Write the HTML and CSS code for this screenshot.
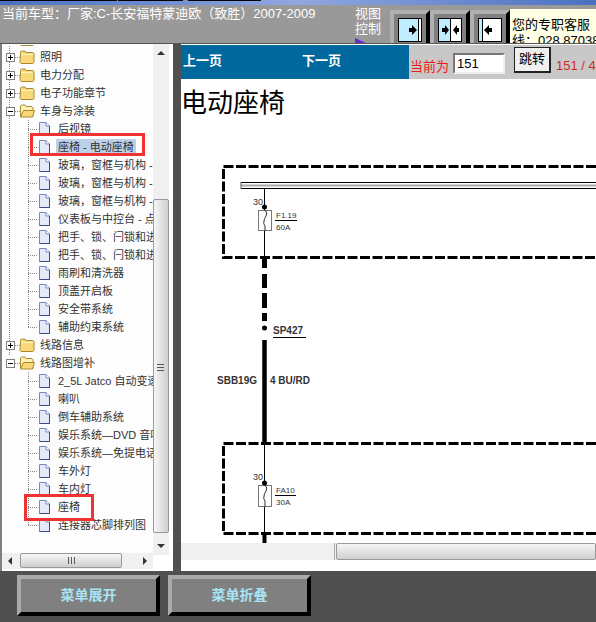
FILE: index.html
```html
<html>
<head>
  <meta charset="utf-8">
  <link rel="stylesheet" href="styles.css">
</head>
<body>
  <svg width="0" height="0" class="defs">
    <symbol id="folder" viewBox="0 0 16 14">
      <path d="M1.5 3.500 L1.500 2 L2.500 1 L6 1 L7 2.500 L14 2.500 L15 3.500 L15 12.500 L14 13.500 L2 13.500 L1 12.500 Z" fill="#f8d878" stroke="#a88a30"/>
      <path d="M2 4.500 H14" stroke="#fff2c0"/>
    </symbol>
    <symbol id="folder-open" viewBox="0 0 16 14">
      <path d="M1.500 12.500 L1.500 2 L2.500 1 L6 1 L7 2.500 L13 2.500 L14 3.500 L14 12.500 Z" fill="#fff0b8" stroke="#a88a30"/>
      <path d="M1.500 13 L4.500 6.500 L15.500 6.500 L13.500 13 Z" fill="#f8d878" stroke="#a88a30"/>
    </symbol>
    <symbol id="doc" viewBox="0 0 13 14">
      <path d="M1.500 .5 H8 L11.500 4 V13.500 H1.500 Z" fill="#e4eafa" stroke="#7a88c0"/>
      <path d="M8 .5 V4 H11.500" fill="#fff" stroke="#7a88c0"/>
      <path d="M11.500 4 V13.500 H1.500" fill="none" stroke="#3a4a80"/>
    </symbol>
  </svg>

  <div class="top-strip"></div>
  <div class="top-bar">
    <div class="car-title">当前车型：厂家:C-长安福特蒙迪欧（致胜）2007-2009</div>
    <div class="view-label">视图<br>控制<span class="view-mark"></span></div>
    <div class="view-buttons">
      <div class="view-btn">
        <svg width="24" height="24" viewBox="0 0 24 24"><rect x=".5" y=".5" width="23" height="23" fill="#fff" stroke="#000"/><rect x="1" y="1" width="19" height="22" fill="#c0ecff"/><path d="M20.500 1V23" stroke="#000"/><path d="M11 10 H14 V7 L19 12 L14 17 V14 H11 Z" fill="#000"/></svg>
      </div>
      <div class="view-btn">
        <svg width="24" height="24" viewBox="0 0 24 24"><rect x=".5" y=".5" width="23" height="23" fill="#fff" stroke="#000"/><rect x="1" y="1" width="11" height="22" fill="#c0ecff"/><path d="M12.500 1V23" stroke="#000"/><path d="M4 10 H7 V7 L11 12 L7 17 V14 H4 Z M21 10 H19 V7 L15 12 L19 17 V14 H21 Z" fill="#000"/></svg>
      </div>
      <div class="view-btn">
        <svg width="24" height="24" viewBox="0 0 24 24"><rect x=".5" y=".5" width="23" height="23" fill="#fff" stroke="#000"/><rect x="1" y="1" width="3" height="22" fill="#c0ecff"/><path d="M4.500 1V23" stroke="#000"/><path d="M14 10 H11 V7 L6 12 L11 17 V14 H14 Z" fill="#000"/></svg>
      </div>
    </div>
    <div class="service">您的专职客服<br>线：028 87038</div>
  </div>

  <div class="main">
    <div class="tree-panel">
      <div class="tree">
        <div class="row clipped"><span class="box plus"></span><svg class="ico"><use href="#folder"/></svg><span class="txt">系统概述</span></div>
        <div class="row"><span class="box plus"></span><svg class="ico"><use href="#folder"/></svg><span class="txt">照明</span></div>
        <div class="row"><span class="box plus"></span><svg class="ico"><use href="#folder"/></svg><span class="txt">电力分配</span></div>
        <div class="row"><span class="box plus"></span><svg class="ico"><use href="#folder"/></svg><span class="txt">电子功能章节</span></div>
        <div class="row"><span class="box minus"></span><svg class="ico"><use href="#folder-open"/></svg><span class="txt">车身与涂装</span></div>
        <div class="row leaf"><svg class="doc"><use href="#doc"/></svg><span class="txt">后视镜</span></div>
        <div class="row leaf"><svg class="doc"><use href="#doc"/></svg><span class="txt selected">座椅 - 电动座椅</span></div>
        <div class="row leaf"><svg class="doc"><use href="#doc"/></svg><span class="txt">玻璃，窗框与机构 - 车窗</span></div>
        <div class="row leaf"><svg class="doc"><use href="#doc"/></svg><span class="txt">玻璃，窗框与机构 - 天窗</span></div>
        <div class="row leaf"><svg class="doc"><use href="#doc"/></svg><span class="txt">玻璃，窗框与机构 - 后窗</span></div>
        <div class="row leaf"><svg class="doc"><use href="#doc"/></svg><span class="txt">仪表板与中控台 - 点烟器</span></div>
        <div class="row leaf"><svg class="doc"><use href="#doc"/></svg><span class="txt">把手、锁、闩锁和进入系统</span></div>
        <div class="row leaf"><svg class="doc"><use href="#doc"/></svg><span class="txt">把手、锁、闩锁和进入系统</span></div>
        <div class="row leaf"><svg class="doc"><use href="#doc"/></svg><span class="txt">雨刷和清洗器</span></div>
        <div class="row leaf"><svg class="doc"><use href="#doc"/></svg><span class="txt">顶盖开启板</span></div>
        <div class="row leaf"><svg class="doc"><use href="#doc"/></svg><span class="txt">安全带系统</span></div>
        <div class="row leaf end"><svg class="doc"><use href="#doc"/></svg><span class="txt">辅助约束系统</span></div>
        <div class="row"><span class="box plus"></span><svg class="ico"><use href="#folder"/></svg><span class="txt">线路信息</span></div>
        <div class="row half"><span class="box minus"></span><svg class="ico"><use href="#folder-open"/></svg><span class="txt">线路图增补</span></div>
        <div class="row leaf tail"><svg class="doc"><use href="#doc"/></svg><span class="txt">2_5L Jatco 自动变速器</span></div>
        <div class="row leaf tail"><svg class="doc"><use href="#doc"/></svg><span class="txt">喇叭</span></div>
        <div class="row leaf tail"><svg class="doc"><use href="#doc"/></svg><span class="txt">倒车辅助系统</span></div>
        <div class="row leaf tail"><svg class="doc"><use href="#doc"/></svg><span class="txt">娱乐系统—DVD 音响系统</span></div>
        <div class="row leaf tail"><svg class="doc"><use href="#doc"/></svg><span class="txt">娱乐系统—免提电话系统</span></div>
        <div class="row leaf tail"><svg class="doc"><use href="#doc"/></svg><span class="txt">车外灯</span></div>
        <div class="row leaf tail"><svg class="doc"><use href="#doc"/></svg><span class="txt">车内灯</span></div>
        <div class="row leaf tail"><svg class="doc"><use href="#doc"/></svg><span class="txt">座椅</span></div>
        <div class="row leaf tail end"><svg class="doc"><use href="#doc"/></svg><span class="txt">连接器芯脚排列图</span></div>
      </div>
      <div class="vscroll">
        <span class="arrow-up"></span>
        <div class="vthumb"><span class="grip"></span></div>
        <span class="arrow-down"></span>
      </div>
      <div class="hscroll">
        <span class="arrow-left"></span>
        <div class="hthumb"><span class="hgrip"></span></div>
        <span class="arrow-right"></span>
      </div>
      <div class="mark mark-one"></div>
      <div class="mark mark-two"></div>
    </div>

    <div class="content">
      <div class="pager">
        <div class="pager-links">
          <span class="page-link">上一页</span>
          <span class="page-link">下一页</span>
        </div>
        <div class="pager-jump">
          <span class="now">当前为</span>
          <span class="page-input">151</span>
          <span class="go">跳转</span>
          <span class="count">151 / 401</span>
        </div>
      </div>
      <div class="page">
        <h1>电动座椅</h1>
        <svg class="diagram" width="415" height="428" viewBox="181 117 415 428">
          <g fill="none" stroke="#000">
            <path d="M596 166.500 H223.500 V257.500 H596" stroke-width="3" stroke-dasharray="10 2.500"/>
            <path d="M241 182.500 H596 M241 188.500 H596" stroke-width="1"/>
            <path d="M241 185.500 H596" stroke="#aaa" stroke-width="2"/>
            <path d="M241 182 V189" stroke="#555"/>
            <path d="M264.500 189 V258"/>
            <path d="M264.500 258 V268 M264.500 274 V288 M264.500 293 V308 M264.500 313 V321" stroke-width="5"/>
            <path d="M264.500 340 V443" stroke-width="4.500"/>
            <path d="M596 443.500 H223.500 V533.500 H596" stroke-width="3" stroke-dasharray="10 2.500"/>
            <path d="M264.500 443 V533"/>
            <path d="M264.500 533 V545" stroke-width="4"/>
            <rect x="258.500" y="210.500" width="13" height="20" fill="#fff" stroke="#777"/>
            <path d="M265 210 q3 3 1 6 t-2 5 q-1 3 1 5 V231" stroke="#333"/>
            <rect x="258.500" y="485.500" width="13" height="21" fill="#fff" stroke="#777"/>
            <path d="M265 485 q3 3 1 6 t-2 5 q-1 3 1 5 V507" stroke="#333"/>
            <path d="M275 220.500 H297 M275 495.500 H296 M273 337.500 H306"/>
          </g>
          <circle cx="264.500" cy="207" r="2.500"/>
          <circle cx="264.500" cy="483" r="2.500"/>
          <circle cx="264.500" cy="328" r="2.500"/>
          <g class="dlabel">
            <text x="253" y="205">30</text>
            <text x="253" y="480">30</text>
            <text x="276" y="218" class="small">F1.19</text>
            <text x="276" y="230" class="small">60A</text>
            <text x="276" y="493" class="small">FA10</text>
            <text x="276" y="505" class="small">30A</text>
            <text x="273" y="334" class="bold">SP427</text>
            <text x="217" y="384" class="bold">SBB19G</text>
            <text x="270" y="384" class="bold">4 BU/RD</text>
          </g>
        </svg>
        <div class="page-scroll">
          <div class="page-track"></div>
          <div class="page-thumb"></div>
        </div>
      </div>
    </div>
  </div>

  <div class="bottom">
    <button class="bevel">菜单展开</button>
    <button class="bevel">菜单折叠</button>
  </div>
</body>
</html>
```

FILE: styles.css
```css
body {
  margin: 0;
  padding: 0;
  width: 596px;
  height: 622px;
  overflow: hidden;
  background: #505050;
  font-family: "Liberation Sans", "Noto Sans CJK SC", sans-serif;
}

.defs {
  display: block;
  height: 0;
}

.top-strip {
  height: 5px;
  background:
    linear-gradient(to right, #000 117px, transparent 117px, transparent 118px, #000 118px, #000 183px, transparent 183px, transparent 188px, #000 188px, #000 261px, transparent 261px) 0 0 / 100% 1px no-repeat,
    linear-gradient(to right, #4a70c0, #90a8e0 50%, #4a70c0);
}

.top-bar {
  height: 39px;
  box-sizing: border-box;
  background: #999;
  border-bottom: 1px solid #555;
  display: flex;
  overflow: hidden;
}

.car-title {
  width: 355px;
  flex: none;
  padding: 1px 0 0 2px;
  box-sizing: border-box;
  color: #fff;
  font-size: 13px;
  line-height: 16px;
  white-space: nowrap;
}

.view-label {
  width: 35px;
  flex: none;
  color: #fff;
  font-size: 13px;
  line-height: 15px;
  padding-top: 1px;
  box-sizing: border-box;
  position: relative;
}

.view-mark {
  position: absolute;
  left: 0;
  top: 33px;
  border-left: 11px solid #6030c8;
  border-top: 5px solid transparent;
}

.view-buttons {
  display: flex;
  flex: none;
  margin-top: 5px;
}

.view-btn {
  width: 40px;
  height: 33px;
  box-sizing: border-box;
  background: #808080;
  border: 4px solid;
  border-color: #b0b0b0 #000 #808080 #b0b0b0;
  border-bottom-width: 0;
  padding: 4px 0 0 4px;
}

.service {
  flex: 1;
  height: 34px;
  margin-top: 4px;
  background: #ffffe6;
  font-size: 13px;
  line-height: 16px;
  padding: 8px 0 0 2px;
  box-sizing: border-box;
  white-space: nowrap;
  overflow: hidden;
}

.main {
  display: flex;
  height: 527px;
  border-left: 2px solid #808080;
}

.tree-panel {
  width: 171px;
  background: #fff;
  position: relative;
  overflow: hidden;
  flex: none;
}

.tree {
  width: 151px;
  height: 508px;
  overflow: hidden;
  background: #fdfdfd;
  margin-top: 1px;
  font-size: 11px;
  color: #333;
}

/* dotted guide of the top level runs behind every row */
.row {
  height: 18px;
  display: flex;
  align-items: center;
  white-space: nowrap;
  position: relative;
  background: linear-gradient(#888 50%, transparent 50%) 7px 0 / 1px 2px repeat-y;
}

.row:not(.leaf)::before {
  content: "";
  position: absolute;
  left: 13px;
  top: 9px;
  width: 6px;
  height: 1px;
  background: linear-gradient(to right, #888 50%, transparent 50%) 0 0 / 2px 1px repeat-x;
}

.half {
  background-size: 1px 2px;
  background-repeat: no-repeat;
  background-position: 7px 0;
}

.tail {
  background: none;
}

.clipped {
  margin-top: -15px;
}

.box {
  width: 9px;
  height: 9px;
  box-sizing: border-box;
  margin-left: 4px;
  border: 1px solid #808080;
  background: #fff;
  flex: none;
  position: relative;
}

.box::before {
  content: "";
  position: absolute;
  left: 1px;
  top: 3px;
  width: 5px;
  height: 1px;
  background: #000;
}

.plus::after {
  content: "";
  position: absolute;
  left: 3px;
  top: 1px;
  width: 1px;
  height: 5px;
  background: #000;
}

.ico {
  width: 16px;
  height: 14px;
  margin-left: 4px;
  flex: none;
  position: relative;
}

.txt {
  margin-left: 3px;
  padding: 1px 2px;
  line-height: 14px;
}

.leaf {
  padding-left: 36px;
}

.leaf::before {
  content: "";
  position: absolute;
  left: 26px;
  top: 0;
  width: 10px;
  height: 18px;
  background:
    linear-gradient(#888 50%, transparent 50%) 0 0 / 1px 2px repeat-y,
    linear-gradient(to right, #888 50%, transparent 50%) 0 9px / 2px 1px repeat-x;
  background-clip: border-box;
}

.end::before {
  height: 10px;
}

.doc {
  width: 13px;
  height: 14px;
  flex: none;
  position: relative;
}

.leaf .txt {
  margin-left: 5px;
}

.leaf .selected {
  background: #bdd0e9;
}

.vscroll {
  position: absolute;
  left: 151px;
  top: 0;
  width: 16px;
  height: 511px;
  background: #f0f0f0;
}

.arrow-up,
.arrow-down {
  position: absolute;
  left: 4px;
  border-left: 4px solid transparent;
  border-right: 4px solid transparent;
}

.arrow-up {
  top: 7px;
  border-bottom: 4px solid #333;
}

.arrow-down {
  bottom: 7px;
  border-top: 4px solid #333;
}

.vthumb {
  position: absolute;
  left: 0;
  top: 155px;
  width: 16px;
  height: 334px;
  box-sizing: border-box;
  border: 1px solid #999;
  border-radius: 2px;
  background: linear-gradient(to right, #f6f6f6, #cfcfcf);
}

.grip {
  position: absolute;
  left: 3px;
  top: 164px;
  width: 7px;
  height: 5px;
  border-top: 1px solid #555;
  border-bottom: 1px solid #555;
}

.grip::after {
  content: "";
  position: absolute;
  left: 0;
  top: 2px;
  width: 7px;
  height: 1px;
  background: #555;
}

.hscroll {
  position: absolute;
  left: 0;
  top: 509px;
  width: 151px;
  height: 16px;
  background: #f0f0f0;
}

.arrow-left,
.arrow-right {
  position: absolute;
  top: 4px;
  border-top: 4px solid transparent;
  border-bottom: 4px solid transparent;
}

.arrow-left {
  left: 6px;
  border-right: 4px solid #333;
}

.arrow-right {
  right: 6px;
  border-left: 4px solid #333;
}

.hthumb {
  position: absolute;
  left: 18px;
  top: 0;
  width: 102px;
  height: 15px;
  box-sizing: border-box;
  border: 1px solid #999;
  border-radius: 2px;
  background: linear-gradient(#f6f6f6, #cfcfcf);
}

.hgrip {
  display: block;
  width: 7px;
  height: 7px;
  margin: 3px auto 0;
  background: repeating-linear-gradient(to right, #555 0, #555 1px, transparent 1px, transparent 3px);
}

.mark {
  position: absolute;
  border: 3px solid #f03232;
  box-sizing: border-box;
}

.mark-one {
  left: 28px;
  top: 89px;
  width: 115px;
  height: 23px;
}

.mark-two {
  left: 22px;
  top: 450px;
  width: 70px;
  height: 27px;
}

.content {
  flex: 1;
  margin-left: 8px;
  background: #fff;
  overflow: hidden;
}

.pager {
  height: 34px;
  margin-top: 1px;
  background: #00689c;
  display: flex;
}

.pager-links {
  width: 228px;
  flex: none;
  display: flex;
  gap: 80px;
  padding: 8px 0 0 2px;
  box-sizing: border-box;
}

.page-link {
  color: #fff;
  font-size: 13px;
  font-weight: bold;
  line-height: 16px;
}

.pager-jump {
  flex: 1;
  background: #c8c8c8;
  display: flex;
  align-items: center;
  white-space: nowrap;
  overflow: hidden;
}

.now {
  flex: none;
  color: #f01818;
  font-size: 13px;
  margin: 6px 0 0 1px;
}

.page-input {
  flex: none;
  width: 52px;
  height: 21px;
  box-sizing: border-box;
  background: #fff;
  border: 2px solid #efefef;
  border-top-color: #777;
  border-left-color: #777;
  margin: 2px 0 0 4px;
  padding-left: 2px;
  font-size: 13px;
  line-height: 17px;
}

.go {
  flex: none;
  width: 37px;
  height: 26px;
  box-sizing: border-box;
  background: #f0f0f0;
  border: 1px solid #222;
  border-right-width: 2px;
  border-bottom-width: 2px;
  margin: -4px 0 0 9px;
  text-align: center;
  font-size: 13px;
  line-height: 22px;
}

.count {
  flex: none;
  color: #d02828;
  font-size: 13px;
  margin: 6px 0 0 5px;
}

.page {
  height: 492px;
  position: relative;
  overflow: hidden;
}

h1 {
  margin: 0;
  padding: 8px 0 0;
  font-size: 26px;
  line-height: 32px;
  font-weight: normal;
  color: #000;
}

.diagram {
  position: absolute;
  left: 0;
  top: 38px;
}

.dlabel text {
  font-family: "Liberation Sans", sans-serif;
  font-size: 9px;
  fill: #333;
}

.dlabel .small {
  font-size: 8px;
}

.dlabel .bold {
  font-weight: bold;
  font-size: 10px;
}

.page-scroll {
  position: absolute;
  left: 0;
  top: 464px;
  width: 100%;
  height: 17px;
  display: flex;
  background: #f0f0f0;
}

.page-track {
  width: 153px;
  border-right: 1px solid #aaa;
}

.page-thumb {
  flex: 1;
  margin-left: 1px;
  border: 1px solid #999;
  border-radius: 2px;
  background: linear-gradient(#f6f6f6, #cfcfcf);
}

.bottom {
  display: flex;
  gap: 8px;
  padding: 4px 0 0 17px;
}

.bevel {
  width: 143px;
  height: 41px;
  box-sizing: border-box;
  background: #808080;
  border: 4px solid;
  border-color: #aaa #000 #000 #aaa;
  padding: 0 0 3px;
  color: #a8e4f4;
  font-family: inherit;
  font-size: 14px;
  font-weight: bold;
}
```
